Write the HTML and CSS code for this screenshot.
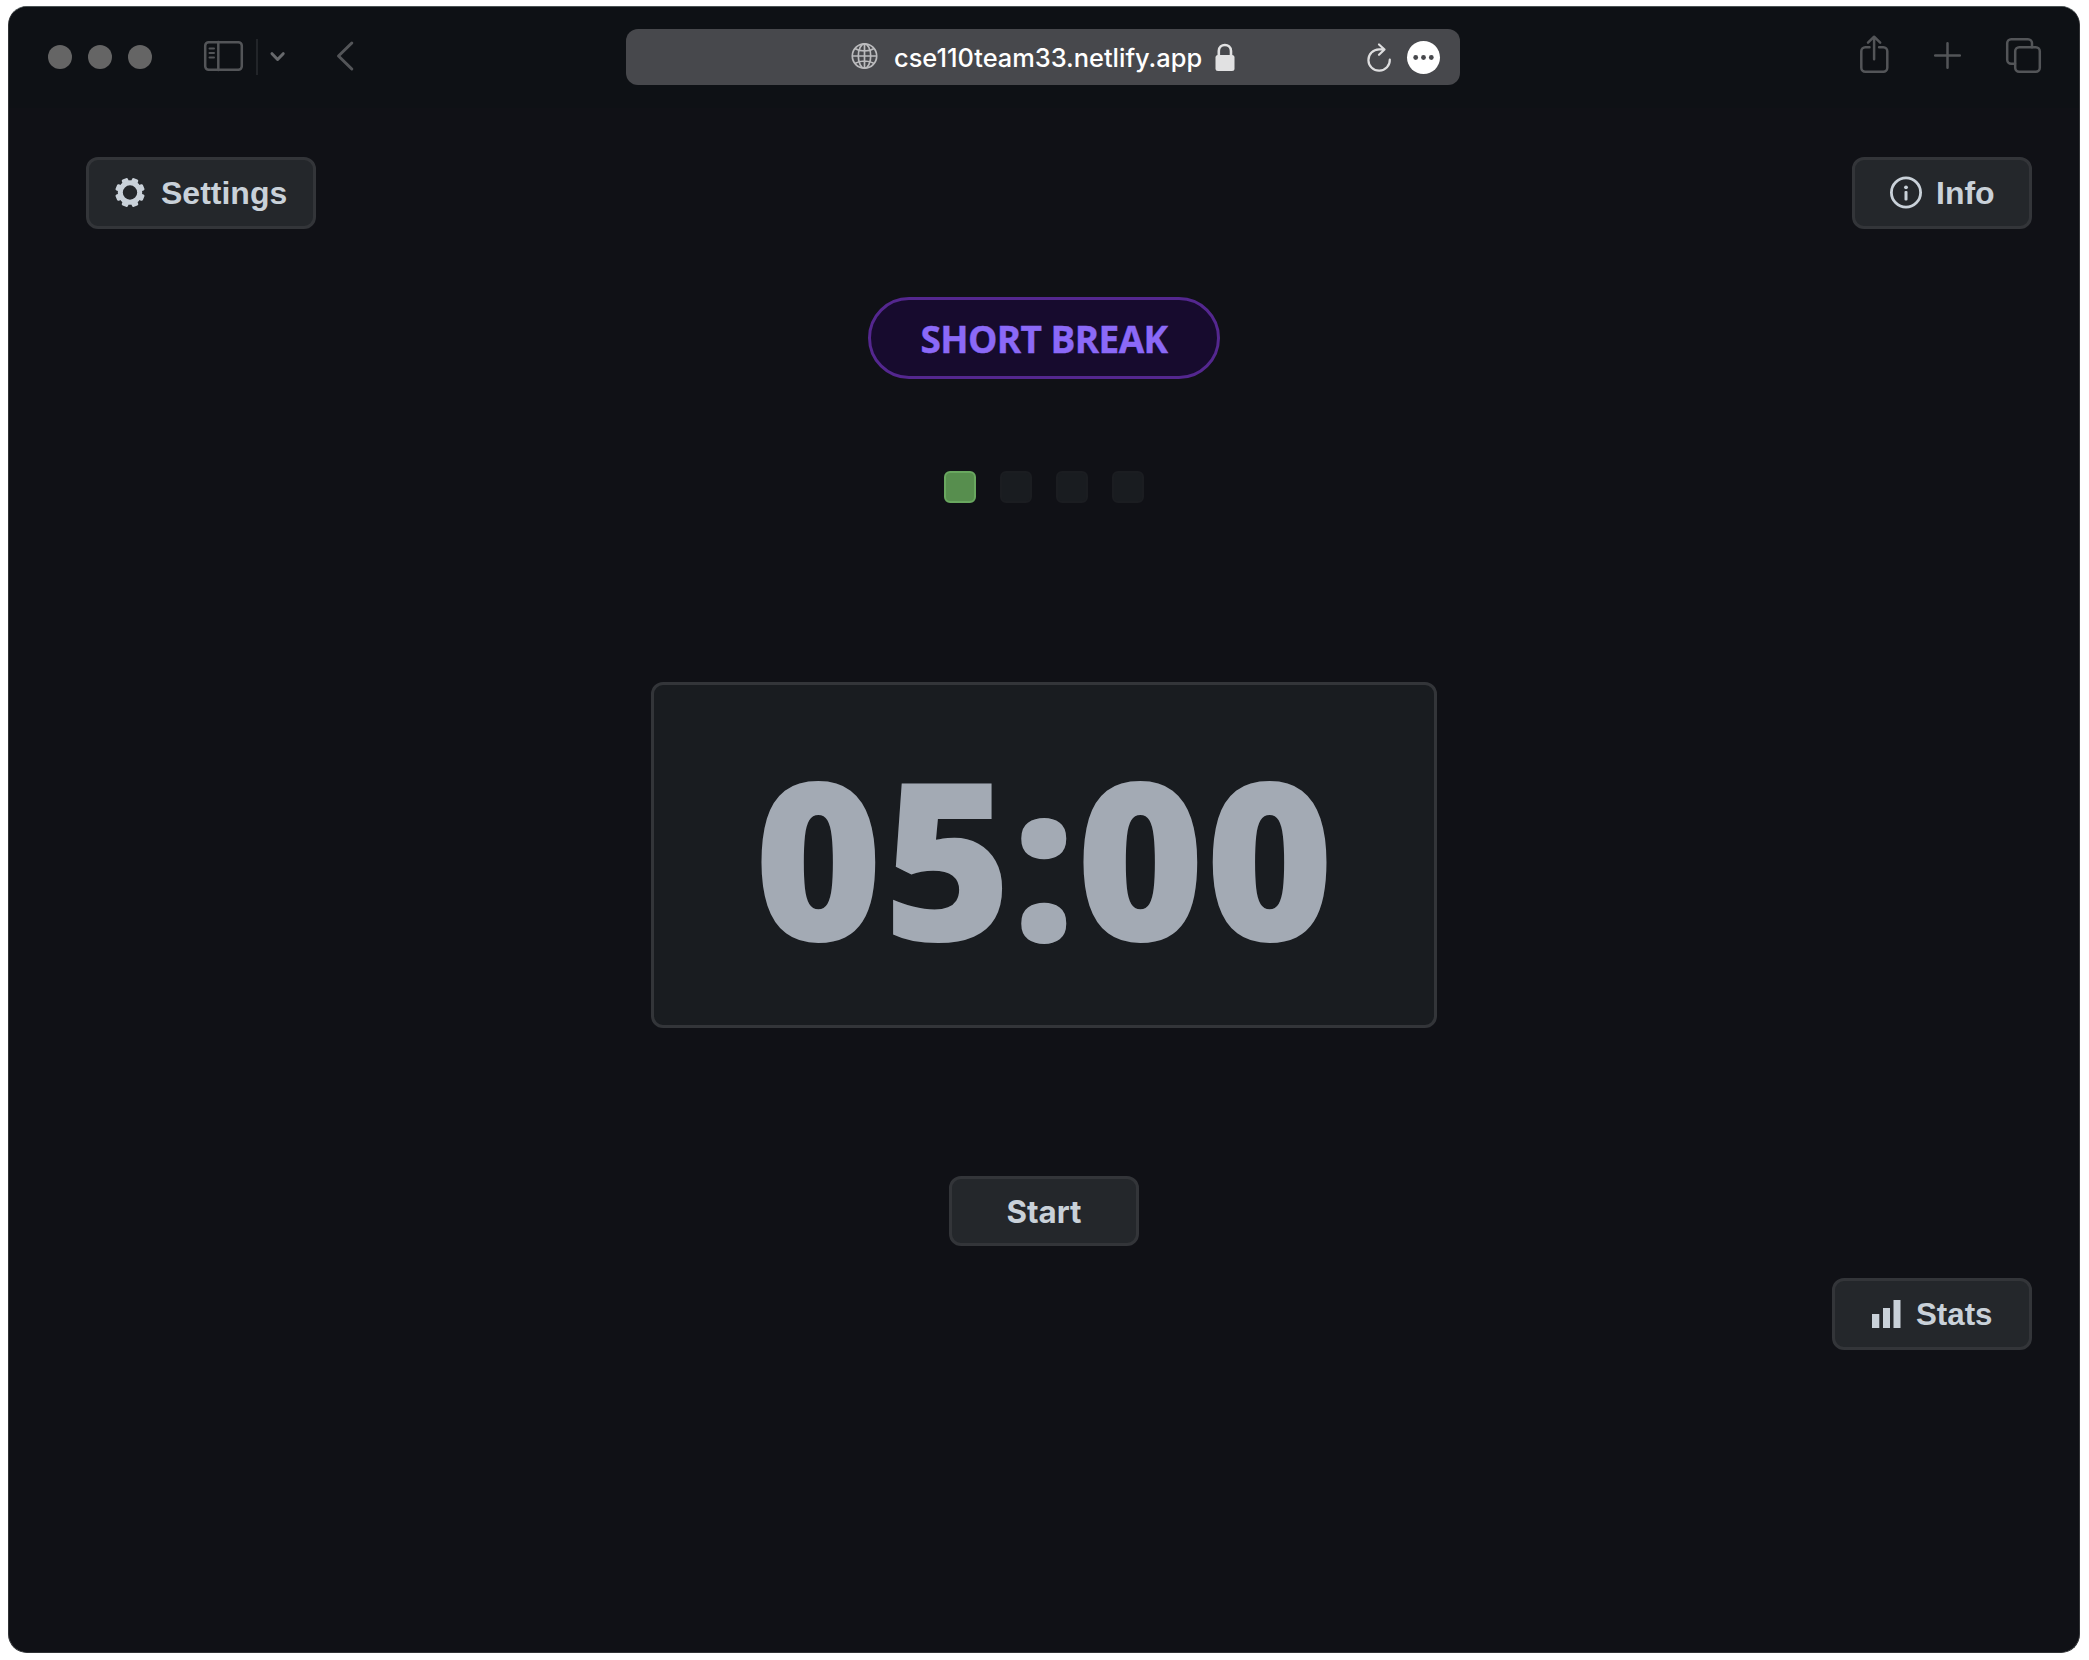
FILE: index.html
```html
<!DOCTYPE html>
<html lang="en">
<head>
<meta charset="utf-8">
<title>Pomodoro Timer</title>
<link rel="stylesheet" href="styles.css">
</head>
<body>
<div class="window">
  <header class="toolbar">
    <div class="side left">
      <div class="lights"><span class="light"></span><span class="light"></span><span class="light"></span></div>
      <svg class="icon sidebar" width="39" height="40" viewBox="204 37 39 40"><rect x="205.2" y="42.2" width="36.6" height="27.6" rx="3.5"/><path d="M218.3 42v28"/><path class="thin" d="M209.5 48.5h4.5M209.5 53h4.5M209.5 57.5h4.5"/></svg>
      <span class="divider"></span>
      <svg class="icon chevron" width="15" height="40" viewBox="270.5 37 15 40"><path d="M272.5 53.7l5.6 5.8 5.6-5.8"/></svg>
      <svg class="icon back" width="18" height="40" viewBox="336 37 18 40"><path d="M351.8 43L338.5 56l13.3 13"/></svg>
    </div>
    <div class="address">
      <svg class="globe" width="27" height="40" viewBox="851.5 37 27 40"><circle cx="865" cy="56" r="12.2"/><ellipse cx="865" cy="56" rx="6.2" ry="12.2"/><path d="M865 44v24M853 56h24M855.3 48.6c5.5 3.2 14 3.2 19.4 0M855.3 63.4c5.5-3.2 14-3.2 19.4 0"/></svg>
      <span class="url">cse110team33.netlify.app</span>
      <svg class="lock" width="20" height="40" viewBox="1215.5 37 20 40"><path d="M1219.3 56v-5c0-8 12.2-8 12.2 0v5"/><rect x="1216" y="55" width="19" height="16" rx="2.5"/></svg>
      <svg class="reload" width="24" height="40" viewBox="1366.5 37 24 40"><path d="M1389.3 59.5a10.7 10.7 0 1 1-10.7-10.2h5.2M1378.5 44.5l5.5 5-5.5 5.3"/></svg>
      <svg class="more" width="33" height="40" viewBox="1407 37 33 40"><circle class="disc" cx="1423.5" cy="57.5" r="16.5"/><circle cx="1415.7" cy="57.5" r="2.4"/><circle cx="1423.5" cy="57.5" r="2.4"/><circle cx="1431.3" cy="57.5" r="2.4"/></svg>
    </div>
    <div class="side right">
      <svg class="icon" width="30" height="40" viewBox="1859.5 37 30 40"><path d="M1870 47.3h-4.2a4 4 0 0 0-4 4v16.4a4 4 0 0 0 4 4h18a4 4 0 0 0 4-4v-16.4a4 4 0 0 0-4-4h-4.2M1874.6 59.2v-21.5M1868.5 42.7l6.1-6 6.1 6"/></svg>
      <svg class="icon plus" width="27" height="40" viewBox="1934 37 27 40"><path d="M1947.5 43.2v24.6M1935.2 55.5h24.6"/></svg>
      <svg class="icon tabs" width="35" height="40" viewBox="2006 37 35 40"><rect x="2015.2" y="47.2" width="24.6" height="24.6" rx="4"/><path d="M2015 63.8h-3.800a4 4 0 0 1-4-4v-16.600a4 4 0 0 1 4-4h16.800a4 4 0 0 1 4 4v4"/></svg>
    </div>
  </header>
  <main class="page">
    <div class="row top">
      <button class="btn settings"><svg width="30" height="30" viewBox="-15 -14.5 30 30"><circle class="ring" r="9.7"/><rect x="-3.3" y="-14.8" width="6.6" height="6" rx="1.5" transform="rotate(22.5)"/><rect x="-3.3" y="-14.8" width="6.6" height="6" rx="1.5" transform="rotate(67.5)"/><rect x="-3.3" y="-14.8" width="6.6" height="6" rx="1.5" transform="rotate(112.5)"/><rect x="-3.3" y="-14.8" width="6.6" height="6" rx="1.5" transform="rotate(157.5)"/><rect x="-3.3" y="-14.8" width="6.6" height="6" rx="1.5" transform="rotate(202.5)"/><rect x="-3.3" y="-14.8" width="6.6" height="6" rx="1.5" transform="rotate(247.5)"/><rect x="-3.3" y="-14.8" width="6.6" height="6" rx="1.5" transform="rotate(292.5)"/><rect x="-3.3" y="-14.8" width="6.6" height="6" rx="1.5" transform="rotate(337.5)"/></svg><span>Settings</span></button>
      <button class="btn info"><svg width="32" height="32" viewBox="0 0.5 32 32"><circle class="outline" cx="16" cy="16" r="14.6"/><circle cx="16" cy="10.8" r="1.9"/><rect x="14.5" y="14.5" width="3" height="9.5" rx="1"/></svg><span>Info</span></button>
    </div>
    <div class="mode">SHORT BREAK</div>
    <div class="sessions"><span class="session done"></span><span class="session"></span><span class="session"></span><span class="session"></span></div>
    <div class="timer">05:00</div>
    <button class="btn start">Start</button>
    <div class="row bottom">
      <button class="btn stats"><svg width="29" height="28" viewBox="0 0 29 28"><path d="M0 14h7.3v14H0zM11 8h7v20h-7zM21.5 0h7v28h-7z"/></svg><span>Stats</span></button>
    </div>
  </main>
</div>
</body>
</html>
```
FILE: styles.css
```css
* { box-sizing: border-box; }
body { margin: 0; padding: 6px 9px 7px 8px; height: 1660px; background: #fff; overflow: hidden; }
svg { display: block; flex: none; overflow: visible; }
.window { height: 1647px; border-radius: 19px; overflow: hidden; background: #101116; border: 1px solid #303235; border-top-color: #4b5354; }
.toolbar { height: 101px; padding-bottom: 1px; display: flex; align-items: center; background: #0e1115; }
.side { display: flex; align-items: center; }
.left { width: 617px; padding-left: 39px; }
.lights { display: flex; gap: 16px; }
.light { width: 24px; height: 24px; border-radius: 50%; background: #656565; }
.icon { fill: none; stroke: #535558; stroke-width: 2.5; stroke-linecap: round; stroke-linejoin: round; }
.icon .thin { stroke-width: 2; }
.sidebar { margin-left: 52px; }
.divider { width: 2px; height: 36px; margin-left: 13px; background: #222529; }
.chevron { margin-left: 12px; stroke: #67696c; stroke-width: 3; }
.back { margin-left: 51px; stroke-width: 3; }
.address { width: 834px; height: 56px; border-radius: 12px; background: #47484c; display: flex; align-items: center; padding-left: 225px; }
.globe { fill: none; stroke: #bbbbbd; stroke-width: 1.7; }
.url { width: 307px; margin-left: 16px; padding-top: 1px; font: 500 25.4px/40px Inter, sans-serif; color: #fff; white-space: nowrap; }
.lock { margin-left: 14px; fill: #e1e1e2; }
.lock path { fill: none; stroke: #e1e1e2; stroke-width: 2.6; }
.reload { margin-left: 132px; fill: none; stroke: #dededf; stroke-width: 2.2; stroke-linecap: round; stroke-linejoin: round; }
.more { margin-left: 16px; fill: #47484c; }
.more .disc { fill: #fff; }
.right { padding-left: 399px; }
.plus { margin-left: 45px; }
.tabs { margin-left: 45px; }
.page { display: flex; flex-direction: column; align-items: center; padding: 49px 47px 0 77px; }
.row { align-self: stretch; display: flex; }
.top { justify-content: space-between; }
.btn { height: 72px; padding: 0; border: 3px solid #333539; border-radius: 12px; background: #24272b; color: #c9d1d9; fill: #c9d1d9; font: 700 32px/40px "Liberation Sans", Arial, sans-serif; display: flex; align-items: center; }
.settings { width: 230px; padding-left: 26px; gap: 16px; }
.ring { fill: none; stroke: #c9d1d9; stroke-width: 5; }
.info { width: 180px; padding-left: 35px; gap: 14px; }
.outline { fill: none; stroke: #c9d1d9; stroke-width: 2.8; }
.mode { width: 352px; height: 82px; margin: 68px 0 0 -30px; border: 3px solid #54278f; border-radius: 41px; background: #170b2e; color: #8b69f7; font: 700 37px/77px "Open Sans", sans-serif; letter-spacing: -0.6px; text-align: center; -webkit-text-stroke: 0.4px #8b69f7; }
.sessions { display: flex; gap: 24px; margin: 92px 0 0 -30px; }
.session { width: 32px; height: 32px; border-radius: 6px; background: #191c20; border: 2px solid #1b1d21; }
.session.done { background: #578e4e; border-color: #69a75f; }
.timer { width: 786px; height: 346px; margin: 179px 0 0 -30px; border: 3px solid #333539; border-radius: 12px; background: #191c20; color: #a3aab4; font: 800 220.5px/342px "Open Sans", sans-serif; text-align: center; }
.start { width: 190px; height: 70px; margin: 148px 0 0 -30px; padding-top: 2px; justify-content: center; font: 700 31.3px/40px Inter, sans-serif; }
.bottom { justify-content: flex-end; margin-top: 32px; }
.stats { width: 200px; padding-left: 37px; gap: 15px; font-size: 31.3px; }
.stats span { padding-top: 1px; }
```
